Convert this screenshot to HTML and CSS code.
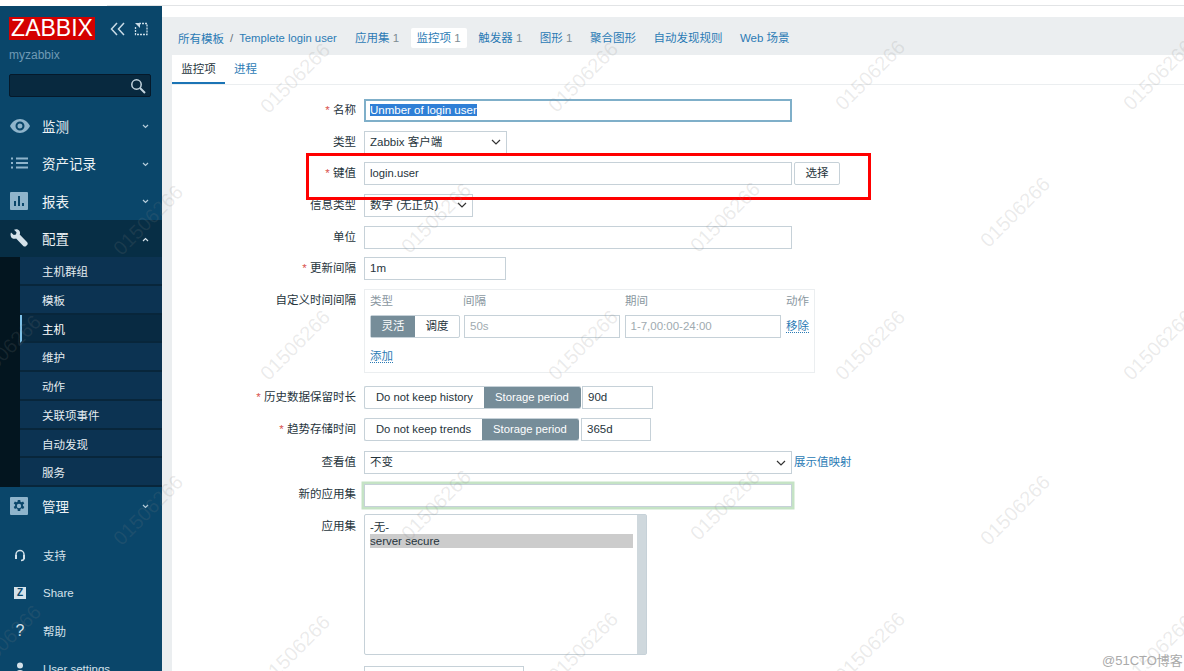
FILE: index.html
```html
<!DOCTYPE html>
<html lang="en">
<head>
    <meta charset="UTF-8">
    <meta name="viewport" content="width=device-width, initial-scale=1.0">
    <title>Zabbix item</title>
    <link rel="stylesheet" href="styles.css">
</head>
<body>
    <div class="top-strip"></div>
    <div class="page">
        <aside class="sidebar">
            <div class="brand">
                <div class="logo">ZABBIX</div>
                <svg class="brand-icon" width="16" height="14" viewBox="0 0 16 14"><path d="M7 1 1.500 7 7 13M14 1 8.500 7 14 13" fill="none" stroke="#c9dbe6" stroke-width="1.500"/></svg>
                <svg class="brand-icon" width="14" height="14" viewBox="0 0 14 14"><path d="M5 1.500h8v11H1.500V5" fill="none" stroke="#c9dbe6" stroke-width="1.300" stroke-dasharray="2 1"/><path d="M1 1h5v5z" fill="#c9dbe6"/></svg>
            </div>
            <div class="server-name">myzabbix</div>
            <div class="search">
                <svg width="16" height="16" viewBox="0 0 16 16"><circle cx="6.500" cy="6.500" r="4.700" fill="none" stroke="#c4d5df" stroke-width="1.500"/><path d="m10 10 5 5" stroke="#c4d5df" stroke-width="2"/></svg>
            </div>
            <nav class="menu">
                <a class="menu-item">
                    <svg class="menu-icon" width="20" height="14" viewBox="0 0 20 14"><path d="M10 0C5.500 0 2 3 0 7c2 4 5.500 7 10 7s8-3 10-7c-2-4-5.500-7-10-7zm0 11.500a4.500 4.500 0 1 1 0-9 4.500 4.500 0 0 1 0 9zM10 4.500a2.500 2.500 0 1 0 0 5 2.500 2.500 0 0 0 0-5z" fill="#8fb4cb" fill-rule="evenodd"/></svg>
                    <span class="menu-text">监测</span>
                    <svg class="caret" width="7" height="5" viewBox="0 0 7 5"><path d="m1 1 2.500 2.500L6 1" fill="none" stroke="#b6cddb" stroke-width="1.200"/></svg>
                </a>
                <a class="menu-item">
                    <svg class="menu-icon" width="20" height="12" viewBox="0 0 20 12"><path d="M1 1.500h2M6 1.500h12M1 6h2M6 6h12M1 10.500h2M6 10.500h12" stroke="#8fb4cb" stroke-width="2"/></svg>
                    <span class="menu-text">资产记录</span>
                    <svg class="caret" width="7" height="5" viewBox="0 0 7 5"><path d="m1 1 2.500 2.500L6 1" fill="none" stroke="#b6cddb" stroke-width="1.200"/></svg>
                </a>
                <a class="menu-item">
                    <svg class="menu-icon" width="18" height="18" viewBox="0 0 18 18"><path d="M1 0h16a1 1 0 0 1 1 1v16a1 1 0 0 1-1 1H1a1 1 0 0 1-1-1V1a1 1 0 0 1 1-1zm3 9v5h2V9zm4-5v10h2V4zm4 7v3h2v-3z" fill="#8fb4cb" fill-rule="evenodd"/></svg>
                    <span class="menu-text">报表</span>
                    <svg class="caret" width="7" height="5" viewBox="0 0 7 5"><path d="m1 1 2.500 2.500L6 1" fill="none" stroke="#b6cddb" stroke-width="1.200"/></svg>
                </a>
                <a class="menu-item menu-item-open">
                    <svg class="menu-icon" width="18" height="18" viewBox="0 0 18 18"><path d="M1 3.500 3.800 6 6 5.500l.5-2.200L4 .7C6-.3 8.500.2 9.500 2c.7 1.200.7 2.600.2 3.600l7.500 7.700c.7.800.7 2-.1 2.800l-1 1c-.8.700-2 .7-2.800-.1L6.100 9.500C5 10 3.500 10 2.300 9.300.6 8.200.1 5.600 1 3.500z" fill="#d5e2ea"/></svg>
                    <span class="menu-text">配置</span>
                    <svg class="caret" width="7" height="5" viewBox="0 0 7 5"><path d="M1 4 3.500 1.500 6 4" fill="none" stroke="#d5e2ea" stroke-width="1.200"/></svg>
                </a>
                <div class="submenu">
                    <div class="submenu-list">
                        <a class="sub-item">主机群组</a>
                        <a class="sub-item">模板</a>
                        <a class="sub-item sub-item-active">主机</a>
                        <a class="sub-item">维护</a>
                        <a class="sub-item">动作</a>
                        <a class="sub-item">关联项事件</a>
                        <a class="sub-item">自动发现</a>
                        <a class="sub-item">服务</a>
                    </div>
                </div>
                <a class="menu-item">
                    <svg class="menu-icon" width="18" height="18" viewBox="0 0 18 18"><path d="M1 0h16a1 1 0 0 1 1 1v16a1 1 0 0 1-1 1H1a1 1 0 0 1-1-1V1a1 1 0 0 1 1-1zm6.800 3-.3 1.800-1 .5L4.900 4.600 3.700 6.400l1.400 1.200v1.200L3.700 10l1.200 2 1.600-.7 1 .6.300 2.100h2.400l.3-2.100 1-.6 1.600.7 1.200-2-1.400-1.200V7.600l1.400-1.200-1.200-1.800-1.600.7-1-.5L10.200 3zM9 6.800a2.200 2.200 0 1 1 0 4.400 2.200 2.200 0 0 1 0-4.400z" fill="#8fb4cb" fill-rule="evenodd"/></svg>
                    <span class="menu-text">管理</span>
                    <svg class="caret" width="7" height="5" viewBox="0 0 7 5"><path d="m1 1 2.500 2.500L6 1" fill="none" stroke="#b6cddb" stroke-width="1.200"/></svg>
                </a>
            </nav>
            <div class="user-menu">
                <a class="user-item">
                    <svg class="user-icon" width="12" height="13" viewBox="0 0 12 13"><path d="M2 8V5.500a4 4 0 0 1 8 0V8M10 9c0 1.500-1 2.500-3 2.500" fill="none" stroke="#d5e2ea" stroke-width="1.500"/><rect x="1" y="6" width="2" height="4" fill="#d5e2ea"/><rect x="9" y="6" width="2" height="4" fill="#d5e2ea"/></svg>
                    <span>支持</span>
                </a>
                <a class="user-item">
                    <span class="z-icon">Z</span>
                    <span>Share</span>
                </a>
                <a class="user-item">
                    <span class="help-icon">?</span>
                    <span>帮助</span>
                </a>
                <a class="user-item">
                    <svg class="user-icon" width="12" height="14" viewBox="0 0 12 14"><circle cx="6" cy="3.500" r="3" fill="#d5e2ea"/><path d="M1 14c0-4 2-6 5-6s5 2 5 6z" fill="#d5e2ea"/></svg>
                    <span>User settings</span>
                </a>
            </div>
        </aside>

        <main class="main">
            <div class="header-gap"></div>
            <div class="header-row">
                <div class="breadcrumb">
                    <a>所有模板</a>
                    <span class="slash">/</span>
                    <a class="latin">Templete login user</a>
                </div>
                <div class="nav-tabs">
                    <a class="nav-tab">应用集 <span class="count">1</span></a>
                    <a class="nav-tab nav-tab-active">监控项 <span class="count">1</span></a>
                    <a class="nav-tab">触发器 <span class="count">1</span></a>
                    <a class="nav-tab">图形 <span class="count">1</span></a>
                    <a class="nav-tab">聚合图形</a>
                    <a class="nav-tab">自动发现规则</a>
                    <a class="nav-tab">Web 场景</a>
                </div>
            </div>
            <div class="card">
                <div class="card-tabs">
                    <a class="card-tab card-tab-active">监控项</a>
                    <a class="card-tab">进程</a>
                </div>
                <form class="item-form">
                    <div class="form-row">
                        <div class="form-label"><i>*</i> 名称</div>
                        <div class="input input-wide input-focus"><span class="selected-text">Unmber of login user</span></div>
                    </div>
                    <div class="form-row">
                        <div class="form-label">类型</div>
                        <div class="input select select-type">Zabbix 客户端
                            <svg width="10" height="6" viewBox="0 0 10 6"><path d="m1 1 4 4 4-4" fill="none" stroke="#333" stroke-width="1.200"/></svg>
                        </div>
                    </div>
                    <div class="form-row">
                        <div class="form-label"><i>*</i> 键值</div>
                        <div class="input input-wide latin">login.user</div>
                        <div class="btn-select">选择</div>
                    </div>
                    <div class="form-row">
                        <div class="form-label">信息类型</div>
                        <div class="input select select-info">数字 (无正负)
                            <svg width="10" height="6" viewBox="0 0 10 6"><path d="m1 1 4 4 4-4" fill="none" stroke="#333" stroke-width="1.200"/></svg>
                        </div>
                    </div>
                    <div class="form-row">
                        <div class="form-label">单位</div>
                        <div class="input input-wide"></div>
                    </div>
                    <div class="form-row">
                        <div class="form-label"><i>*</i> 更新间隔</div>
                        <div class="input input-interval">1m</div>
                    </div>
                    <div class="form-row form-row-custom">
                        <div class="form-label">自定义时间间隔</div>
                        <div class="custom-box">
                            <div class="custom-head">
                                <span class="col-type">类型</span>
                                <span class="col-gap">间隔</span>
                                <span class="col-period">期间</span>
                                <span class="col-action">动作</span>
                            </div>
                            <div class="custom-line">
                                <div class="segment segment-small">
                                    <span class="segment-on">灵活</span>
                                    <span>调度</span>
                                </div>
                                <div class="input input-gap placeholder">50s</div>
                                <div class="input input-period placeholder">1-7,00:00-24:00</div>
                                <a class="dotted-link">移除</a>
                            </div>
                            <a class="dotted-link add-link">添加</a>
                        </div>
                    </div>
                    <div class="form-row">
                        <div class="form-label"><i>*</i> 历史数据保留时长</div>
                        <div class="segment latin">
                            <span class="seg-history">Do not keep history</span>
                            <span class="segment-on seg-storage">Storage period</span>
                        </div>
                        <div class="input input-days">90d</div>
                    </div>
                    <div class="form-row form-row-trends">
                        <div class="form-label"><i>*</i> 趋势存储时间</div>
                        <div class="segment latin">
                            <span class="seg-trends">Do not keep trends</span>
                            <span class="segment-on seg-storage">Storage period</span>
                        </div>
                        <div class="input input-trends">365d</div>
                    </div>
                    <div class="form-row form-row-view">
                        <div class="form-label">查看值</div>
                        <div class="input select input-wide">不变
                            <svg width="10" height="6" viewBox="0 0 10 6"><path d="m1 1 4 4 4-4" fill="none" stroke="#333" stroke-width="1.200"/></svg>
                        </div>
                        <a class="value-map">展示值映射</a>
                    </div>
                    <div class="form-row form-row-new">
                        <div class="form-label">新的应用集</div>
                        <div class="input input-wide input-new"></div>
                    </div>
                    <div class="form-row form-row-list">
                        <div class="form-label">应用集</div>
                        <div class="listbox">
                            <div class="listbox-items">
                                <div>-无-</div>
                                <div class="listbox-selected">server secure</div>
                            </div>
                            <div class="listbox-track"></div>
                        </div>
                    </div>
                    <div class="form-row">
                        <div class="form-label"></div>
                        <div class="input input-last"></div>
                    </div>
                    <div class="red-box"></div>
                </form>
            </div>
        </main>
    </div>

    <div class="watermarks">
        <span class="mark mark-a1">01506266</span>
        <span class="mark mark-a2">01506266</span>
        <span class="mark mark-a3">01506266</span>
        <span class="mark mark-a4">01506266</span>
        <span class="mark mark-b1">01506266</span>
        <span class="mark mark-b2">01506266</span>
        <span class="mark mark-b3">01506266</span>
        <span class="mark mark-b4">01506266</span>
        <span class="mark mark-c0">01506266</span>
        <span class="mark mark-c1">01506266</span>
        <span class="mark mark-c2">01506266</span>
        <span class="mark mark-c3">01506266</span>
        <span class="mark mark-c4">01506266</span>
        <span class="mark mark-d1">01506266</span>
        <span class="mark mark-d2">01506266</span>
        <span class="mark mark-d3">01506266</span>
        <span class="mark mark-d4">01506266</span>
        <span class="mark mark-e0">01506266</span>
        <span class="mark mark-e1">01506266</span>
        <span class="mark mark-e2">01506266</span>
        <span class="mark mark-e3">01506266</span>
        <span class="mark mark-e4">01506266</span>
        <span class="blog-mark">@51CTO博客</span>
    </div>
</body>
</html>
```

FILE: styles.css
```css
* {
    box-sizing: border-box;
}
body {
    margin: 0;
    height: 671px;
    overflow: hidden;
    background-color: #fff;
    color: #26343c;
    font-family: "Liberation Sans", "Noto Sans CJK SC", sans-serif;
    font-size: 11.500px;
}
a {
    color: #2b7bb5;
}
.latin {
    font-size: 11.250px;
}
.top-strip {
    height: 6px;
    margin-left: 107px;
    border-bottom: 1px solid #e2e4e6;
}
.page {
    display: flex;
    height: 665px;
}

/* sidebar */
.sidebar {
    width: 162px;
    flex-shrink: 0;
    background-color: #0a466a;
    overflow: hidden;
}
.brand {
    display: flex;
    align-items: center;
    height: 23px;
    margin: 11px 0 0 9px;
}
.logo {
    width: 86px;
    height: 23px;
    margin-right: 15px;
    background-color: #d40000;
    color: #fff;
    font-size: 23px;
    line-height: 23px;
    text-align: center;
}
.brand-icon {
    margin-right: 8px;
}
.server-name {
    margin: 8px 0 0 9px;
    color: #6f9ab5;
    font-size: 12px;
    line-height: 14px;
}
.search {
    display: flex;
    align-items: center;
    justify-content: flex-end;
    width: 142px;
    height: 23px;
    margin: 12px 0 0 9px;
    padding-right: 4px;
    background-color: #08293f;
    border: 1px solid #05192a;
    border-radius: 2px;
}
.menu {
    margin-top: 10px;
}
.menu-item {
    display: flex;
    align-items: center;
    height: 37.500px;
    padding-left: 10px;
    color: #eef3f6;
    font-size: 13.500px;
    position: relative;
}
.menu-icon {
    flex-shrink: 0;
}
.menu-text {
    position: absolute;
    left: 42px;
}
.caret {
    position: absolute;
    left: 142px;
    top: 17px;
}
.menu-item-open {
    background-color: #072e45;
}
.submenu {
    padding-left: 20px;
    background-color: #03151f;
}
.sub-item {
    display: block;
    height: 28.750px;
    padding-left: 22px;
    background-color: #0c3352;
    border-bottom: 2px solid #08263b;
    color: #e4ecf1;
    font-size: 11.500px;
    line-height: 31px;
}
.sub-item-active {
    background-color: #082a42;
    border-left: 2px solid #7cc0e8;
    padding-left: 20px;
    color: #fff;
}
.user-menu {
    margin-top: 12px;
}
.user-item {
    display: flex;
    align-items: center;
    height: 37.800px;
    padding-left: 14px;
    color: #d5e2ea;
    font-size: 11.500px;
    position: relative;
}
.user-item span:last-child {
    position: absolute;
    left: 43px;
}
.z-icon {
    width: 12px;
    height: 12px;
    background-color: #d5e2ea;
    color: #0a466a;
    font-size: 10px;
    font-weight: bold;
    line-height: 12px;
    text-align: center;
}
.help-icon {
    width: 12px;
    font-size: 16px;
    text-align: center;
}

/* header */
.main {
    flex: 1;
    min-width: 0;
    background-color: #ebeef0;
}
.header-gap {
    height: 11px;
    background-color: #fff;
}
.header-row {
    display: flex;
    align-items: center;
    height: 38px;
    padding: 4px 0 0 16px;
}
.breadcrumb {
    display: flex;
    align-items: center;
    gap: 6px;
    width: 171px;
    white-space: nowrap;
}
.slash {
    color: #68737a;
}
.nav-tabs {
    display: flex;
    gap: 5.500px;
}
.nav-tab {
    height: 20px;
    padding: 0 6px;
    line-height: 20px;
    white-space: nowrap;
}
.nav-tab-active {
    background-color: #fff;
    border-radius: 2px;
}
.count {
    color: #7d8b93;
}
.card {
    height: 620px;
    margin-left: 10px;
    background-color: #fff;
    position: relative;
}
.card-tabs {
    display: flex;
    height: 30px;
    border-bottom: 1px solid #ebeef0;
}
.card-tab {
    height: 29px;
    padding: 0 9px;
    line-height: 29px;
    white-space: nowrap;
}
.card-tab-active {
    width: 53px;
    padding: 0;
    border-bottom: 2px solid #1b74b5;
    color: #26343c;
    text-align: center;
}

/* form */
.item-form {
    padding-top: 14px;
}
.form-row {
    display: flex;
    gap: 2px;
    height: 23.670px;
    margin-bottom: 8px;
}
.form-label {
    width: 184px;
    margin-right: 6px;
    line-height: 22px;
    text-align: right;
    white-space: nowrap;
}
.form-label i {
    color: #d9534f;
    font-style: normal;
}
.input {
    height: 23px;
    padding: 0 5px;
    background-color: #fff;
    border: 1px solid #c6d1d8;
    line-height: 21px;
    white-space: nowrap;
}
.input-wide {
    width: 428px;
}
.input-focus {
    padding: 0 4px;
    border: 2px solid #7fafc9;
    line-height: 19px;
}
.selected-text {
    background-color: #2f7fd6;
    color: #fff;
}
.select {
    display: flex;
    align-items: center;
    justify-content: space-between;
}
.select-type {
    width: 143px;
}
.select-info {
    width: 109px;
}
.btn-select {
    width: 46px;
    height: 23px;
    border: 1px solid #c6d1d8;
    border-radius: 2px;
    line-height: 21px;
    text-align: center;
}
.input-interval {
    width: 142px;
}
.form-row-custom {
    height: 84px;
    margin-bottom: 13px;
}
.custom-box {
    width: 451px;
    height: 84px;
    padding: 3px 5px;
    border: 1px solid #ebeef0;
}
.custom-head {
    display: flex;
    height: 22px;
    color: #8a979f;
    line-height: 16px;
    white-space: nowrap;
}
.col-type {
    width: 93px;
}
.col-gap {
    width: 162px;
}
.col-period {
    width: 161px;
}
.custom-line {
    display: flex;
    gap: 4px;
    height: 23px;
}
.segment {
    display: flex;
    height: 23px;
    background-color: #fff;
    border: 1px solid #c6d1d8;
    border-right: none;
    border-radius: 2px;
    line-height: 21px;
    white-space: nowrap;
}
.segment span {
    padding: 0 11px;
}
.segment-small {
    width: 90px;
    border-right: 1px solid #c6d1d8;
}
.segment-small span {
    width: 44px;
    padding: 0;
    text-align: center;
}
.segment-on {
    background-color: #768d99;
    color: #fff;
}
.seg-history {
    width: 119px;
}
.seg-trends {
    width: 117px;
}
.seg-storage {
    width: 97px;
    border-radius: 0 2px 2px 0;
}
.input-gap {
    width: 156px;
}
.input-period {
    width: 157px;
    margin-left: 1px;
}
.placeholder {
    color: #a0aab0;
}
.dotted-link {
    height: 18px;
    margin-left: 1px;
    border-bottom: 1px dotted #2b7bb5;
    line-height: 22px;
    white-space: nowrap;
}
.add-link {
    display: inline-block;
    margin: 7px 0 0;
}
.input-days {
    width: 71px;
    margin-left: -1px;
}
.input-trends {
    width: 70px;
}
.form-row-trends {
    margin-bottom: 10px;
}
.form-row-view {
    margin-bottom: 6px;
}
.value-map {
    line-height: 23px;
}
.form-row-new {
    height: 28px;
    margin-bottom: 5px;
}
.form-row-new .form-label {
    line-height: 26px;
}
.input-new {
    margin-top: 3px;
    box-shadow: 0 0 0 2.500px #c5e3c5;
}
.form-row-list {
    height: 141px;
    margin-bottom: 11px;
}
.form-row-list .form-label {
    line-height: 24px;
}
.listbox {
    display: flex;
    width: 283px;
    height: 141px;
    padding-left: 5px;
    border: 1px solid #c6d1d8;
    border-radius: 2px;
}
.listbox-items {
    flex: 1;
    padding-top: 5px;
    margin-right: 4px;
    line-height: 14px;
}
.listbox-selected {
    background-color: #cccccc;
}
.listbox-track {
    width: 9px;
    background-color: #cfd8dd;
}
.input-last {
    width: 160px;
}

/* annotation and overlays */
.red-box {
    position: absolute;
    left: 134px;
    top: 98px;
    width: 565px;
    height: 47px;
    border: 3px solid #ff0000;
}
.watermarks {
    position: absolute;
    inset: 0;
    overflow: hidden;
    pointer-events: none;
}
.mark {
    position: absolute;
    width: 100px;
    margin: -12px 0 0 -50px;
    color: rgba(130, 130, 130, 0.16);
    font-size: 20px;
    line-height: 24px;
    text-align: center;
    transform: rotate(-45deg);
}
.mark-a1 { left: 295px; top: 78px; }
.mark-a2 { left: 583px; top: 77px; }
.mark-a3 { left: 870px; top: 75px; }
.mark-a4 { left: 1158px; top: 75px; }
.mark-b1 { left: 148px; top: 220px; }
.mark-b2 { left: 436px; top: 218px; }
.mark-b3 { left: 725px; top: 217px; }
.mark-b4 { left: 1015px; top: 212px; }
.mark-c0 { left: 6px; top: 350px; }
.mark-c1 { left: 295px; top: 345px; }
.mark-c2 { left: 583px; top: 345px; }
.mark-c3 { left: 870px; top: 345px; }
.mark-c4 { left: 1158px; top: 345px; }
.mark-d1 { left: 148px; top: 510px; }
.mark-d2 { left: 436px; top: 505px; }
.mark-d3 { left: 725px; top: 505px; }
.mark-d4 { left: 1015px; top: 510px; }
.mark-e0 { left: 6px; top: 640px; }
.mark-e1 { left: 295px; top: 650px; }
.mark-e2 { left: 583px; top: 647px; }
.mark-e3 { left: 870px; top: 647px; }
.mark-e4 { left: 1158px; top: 650px; }
.blog-mark {
    position: absolute;
    left: 1102px;
    top: 650px;
    color: #aaaaaa;
    font-size: 13px;
}
```
